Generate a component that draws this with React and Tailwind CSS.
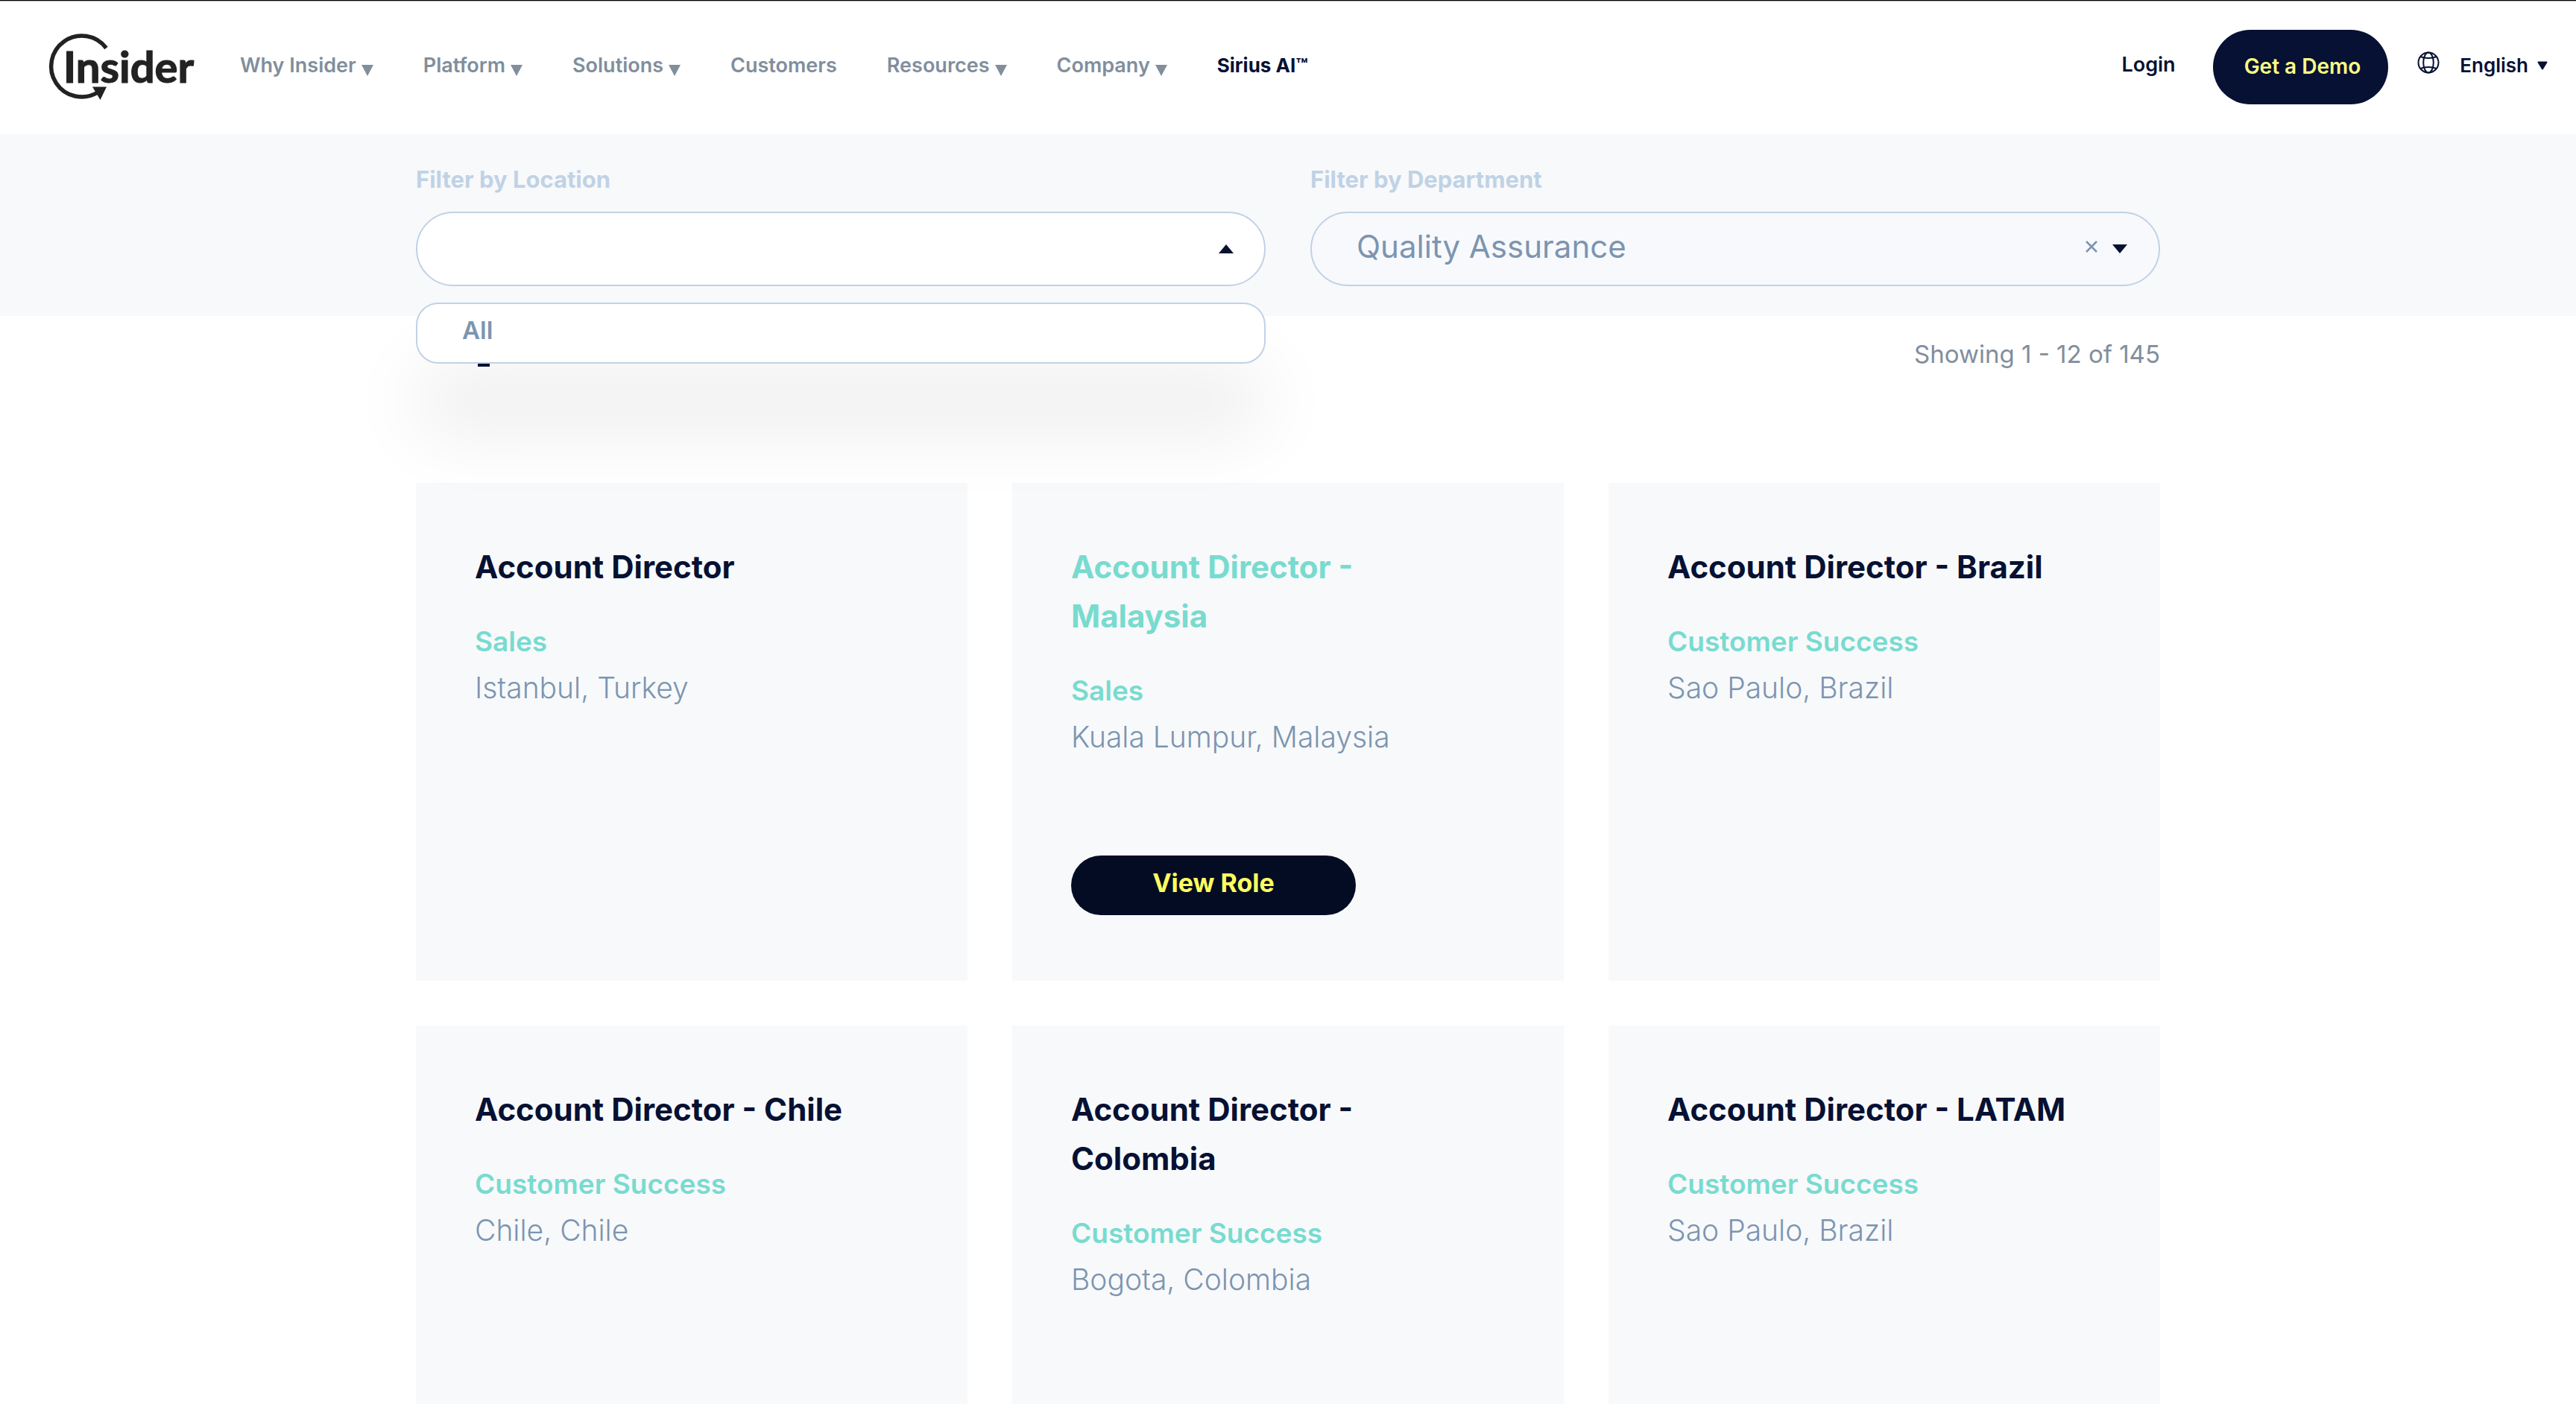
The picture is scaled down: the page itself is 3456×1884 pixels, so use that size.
const NAV_ITEMS = [
  { label: "Why Insider", menu: true },
  { label: "Platform", menu: true },
  { label: "Solutions", menu: true },
  { label: "Customers", menu: false },
  { label: "Resources", menu: true },
  { label: "Company", menu: true },
];

const JOBS = [
  { title: "Account Director", department: "Sales", location: "Istanbul, Turkey" },
  { title: "Account Director - Malaysia", department: "Sales", location: "Kuala Lumpur, Malaysia", active: true },
  { title: "Account Director - Brazil", department: "Customer Success", location: "Sao Paulo, Brazil" },
  { title: "Account Director - Chile", department: "Customer Success", location: "Chile, Chile" },
  { title: "Account Director - Colombia", department: "Customer Success", location: "Bogota, Colombia" },
  { title: "Account Director - LATAM", department: "Customer Success", location: "Sao Paulo, Brazil" },
];

function Logo() {
  return (
    <svg className="block h-[100px] w-[204px]" viewBox="0 0 204 100" role="img" aria-label="Insider">
      <path d="M81.5 24.5A41 41 0 1 0 70 84" fill="none" stroke="#222" strokeWidth="5.5" />
      <path d="M63 76.5H82L73.5 94Z" fill="#222" />
      <text x="24" y="71" fill="#222" stroke="#222" strokeWidth="1.2" className="font-['Lato',sans-serif] text-[58px] font-bold">
        Insider
      </text>
    </svg>
  );
}

function Triangle({ className, up = false }) {
  return (
    <svg className={className} viewBox="0 0 20 12" preserveAspectRatio="none" aria-hidden="true">
      <path d={up ? "M0 12H20L10 0Z" : "M0 0H20L10 12Z"} fill="currentColor" />
    </svg>
  );
}

function RoundedTriangle({ className }) {
  return (
    <svg className={className} viewBox="0 0 14 12" aria-hidden="true">
      <path d="M1.5 1.5H12.5L7 10.5Z" fill="currentColor" stroke="currentColor" strokeWidth="2" strokeLinejoin="round" />
    </svg>
  );
}

function Globe() {
  return (
    <svg className="mb-2 size-[30px]" viewBox="0 0 30 30" fill="none" stroke="currentColor" strokeWidth="2" aria-hidden="true">
      <circle cx="15" cy="15" r="13.5" />
      <ellipse cx="15" cy="15" rx="6.8" ry="13.5" />
      <path d="M4.5 7C10 9.6 20 9.6 25.5 7M4.5 23C10 20.4 20 20.4 25.5 23" />
    </svg>
  );
}

function Header() {
  return (
    <header className="border-t border-black bg-white">
      <div className="flex h-[179px] items-center border-t border-[#b5b5b5] pb-0.5 pl-[61px] pr-[38px] text-[27px] font-semibold leading-[40px] text-[#061133]">
        <a href="#home">
          <Logo />
        </a>
        <nav className="ml-[57px] flex items-center gap-[67px] pb-1" aria-label="Main">
          {NAV_ITEMS.map((item) => (
            <a key={item.label} href="#menu" className="flex items-center gap-[7px] text-[#818e9c]">
              {item.label}
              {item.menu && <Triangle className="mt-3 h-[15px] w-4" />}
            </a>
          ))}
          <a href="#sirius" className="text-[26px] font-bold">
            Sirius AI™
          </a>
        </nav>
        <div className="ml-auto flex items-center">
          <a href="#login" className="pb-1.5">
            Login
          </a>
          <button type="button" className="ml-[50px] h-[100px] rounded-full bg-[#061133] pb-0.5 pl-[42px] pr-[37px] text-[28px] text-[#fbff85]">
            Get a Demo
          </button>
          <button type="button" className="ml-[39px] flex items-center pb-1 text-[26px]">
            <Globe />
            <span className="ml-[27px]">English</span>
            <RoundedTriangle className="ml-3 h-3 w-3.5" />
          </button>
        </div>
      </div>
    </header>
  );
}

function Filters() {
  return (
    <section className="relative z-10 bg-[#f8f9fb] pb-10 pt-9" aria-label="Filters">
      <div className="mx-auto grid max-w-[2340px] grid-cols-2 gap-[60px]">
        <div className="flex flex-col gap-5">
          <label htmlFor="location" className="text-[31px] font-bold leading-[50px] text-[#c0d2e5]">
            Filter by Location
          </label>
          <div className="relative -mt-0.5">
            <select
              id="location"
              defaultValue=""
              className="block h-[100px] w-full appearance-none rounded-full border-2 border-[#c0d2e5] bg-white pl-[58px] text-[42px] text-[#7c95b0]"
            >
              <option value=""></option>
              <option value="all">All</option>
            </select>
            <Triangle up className="pointer-events-none absolute right-[43px] top-11 h-3 w-5 text-[#061133]" />
            <ul
              role="listbox"
              aria-label="Location options"
              className="absolute inset-x-0 top-full mt-[22px] rounded-[30px] border-2 border-[#c0d2e5] bg-white pb-[18px] pl-[60px] pt-2.5 shadow-[0_90px_100px_rgba(0,0,0,0.08)]"
            >
              <li role="option" aria-selected="false" className="text-[33px] font-semibold leading-[50px] text-[#7c95b0]">
                All
              </li>
            </ul>
          </div>
        </div>
        <div className="flex flex-col gap-5">
          <label htmlFor="department" className="text-[31px] font-bold leading-[50px] text-[#c0d2e5]">
            Filter by Department
          </label>
          <div className="relative -mt-0.5">
            <select
              id="department"
              defaultValue="qa"
              className="block h-[100px] w-full appearance-none rounded-full border-2 border-[#c0d2e5] bg-[#f8f9fd] pb-2 pl-[60px] text-[42px] text-[#7c95b0]"
            >
              <option value="qa">Quality Assurance</option>
            </select>
            <button type="button" aria-label="Clear department" className="absolute right-[84px] top-[39px] text-[#7c95b0]">
              <svg className="block size-4" viewBox="0 0 16 16" stroke="currentColor" strokeWidth="2.6" aria-hidden="true">
                <path d="M1 1L15 15M15 1L1 15" />
              </svg>
            </button>
            <Triangle className="pointer-events-none absolute right-11 top-11 h-3 w-5 text-[#061133]" />
          </div>
        </div>
      </div>
    </section>
  );
}

function JobCard({ job }) {
  return (
    <article className="flex min-h-[668px] flex-col items-start bg-[#f8f9fb] pb-[88px] pl-[79px] pr-[100px] pt-20">
      <h3 className={job.active ? "text-[42px] font-bold leading-[66px] text-[#78dbcf]" : "text-[42px] font-bold leading-[66px] text-[#061133]"}>
        {job.title}
      </h3>
      <p className="mt-9 text-[37px] font-semibold leading-[62px] text-[#78dbcf]">{job.department}</p>
      <p className="text-[39px] font-light leading-[62px] text-[#7c95b0]">{job.location}</p>
      {job.active && (
        <button type="button" className="mt-auto h-20 w-[382px] rounded-full bg-[#040c24] pb-2 text-[34px] font-bold text-[#feff5e]">
          View Role
        </button>
      )}
    </article>
  );
}

export default function App() {
  return (
    <div className="min-h-screen bg-white font-['Inter',sans-serif]">
      <Header />
      <Filters />
      <main className="mx-auto max-w-[2340px]">
        <div className="flex h-[224px] items-start justify-between">
          <span className="ml-[83px] mt-16 h-1 w-4 bg-[#061133]" />
          <p className="pt-[26px] text-[33px] leading-[50px] text-[#818e9c]">Showing 1 - 12 of 145</p>
        </div>
        <div className="grid grid-cols-3 gap-[60px]">
          {JOBS.map((job) => (
            <JobCard key={job.title} job={job} />
          ))}
        </div>
      </main>
    </div>
  );
}
